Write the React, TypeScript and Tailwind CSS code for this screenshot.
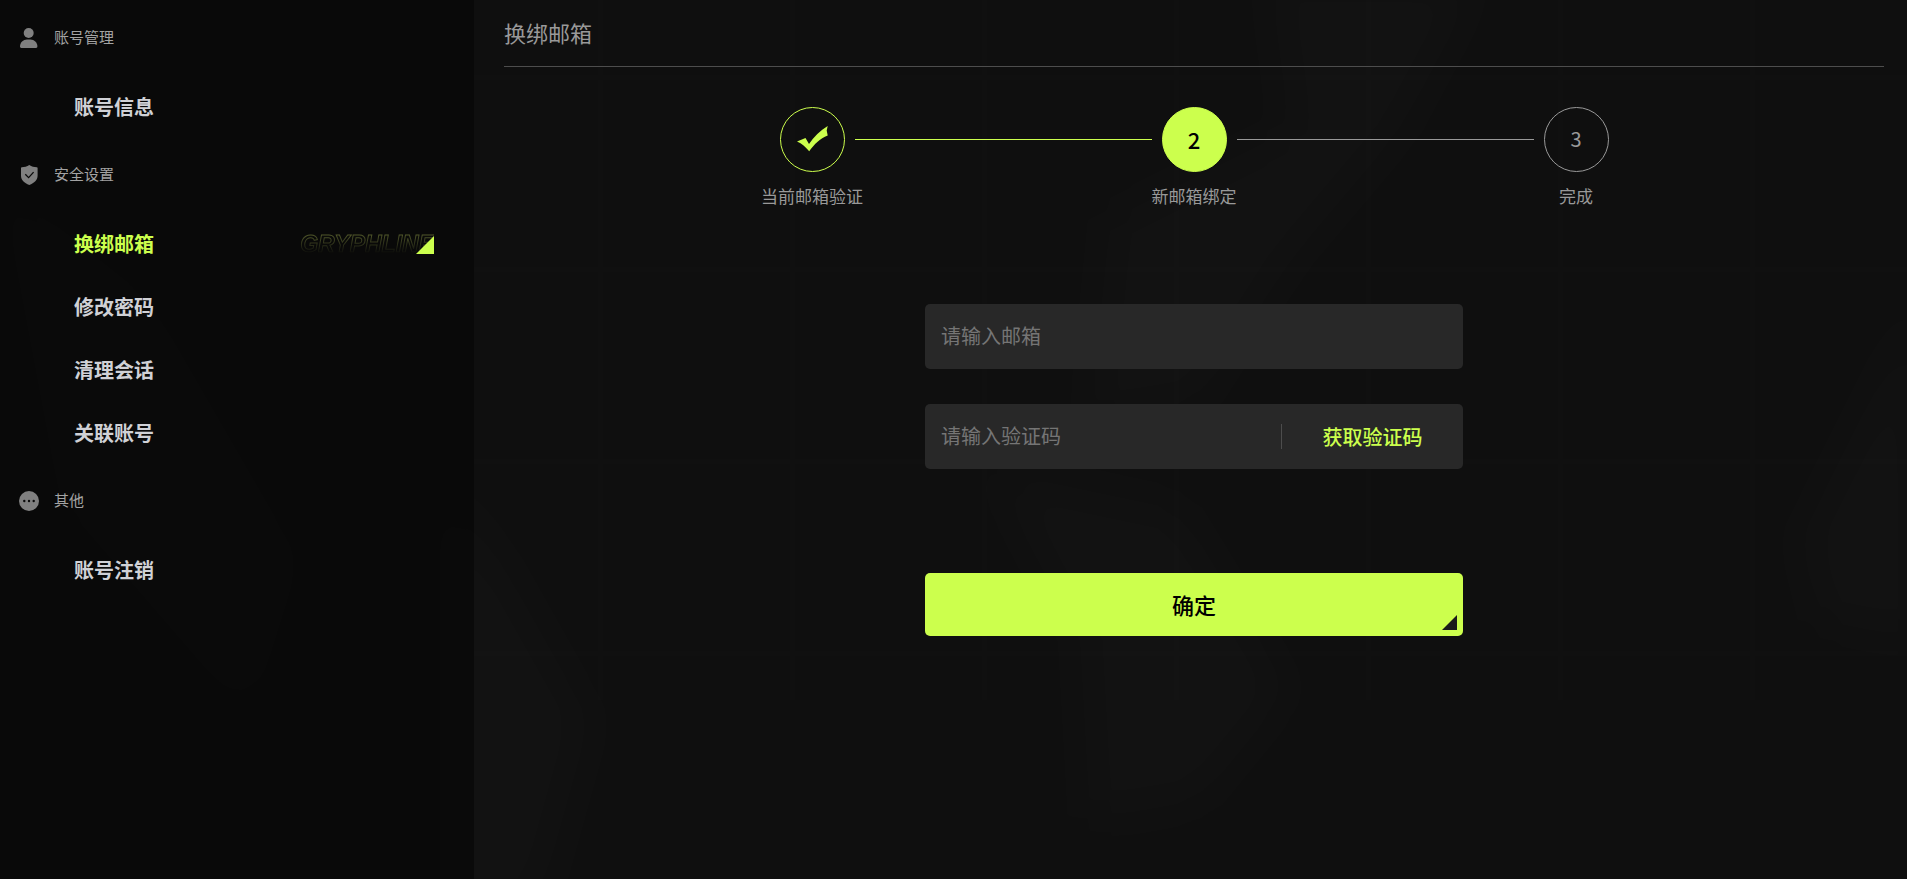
import { useState } from 'react'
import type { ReactNode } from 'react'
import clsx from 'clsx'

type MenuGroup = {
  title: string
  icon: ReactNode
  items: string[]
}

const UserIcon = (
  <svg viewBox="0 0 20 20" className="size-5" fill="currentColor" aria-hidden="true">
    <circle cx="9.7" cy="5" r="5" />
    <path d="M1 18.6C1 14.6 4.2 11.6 8 11.6h3.4c3.8 0 7 3 7 7 0 .8-.5 1.4-1.3 1.4H2.3C1.5 20 1 19.4 1 18.6Z" />
  </svg>
)

const ShieldIcon = (
  <svg viewBox="0 0 20 20" className="size-5" aria-hidden="true">
    <path
      d="M10.3 0C8 1.5 5.4 2.2 2.8 2.3c-.5 0-.8.3-.8.8V10.5c0 4.6 3.3 7.6 8.3 9.4 5-1.8 8.3-4.8 8.3-9.4V3.1c0-.5-.3-.8-.8-.8C15.2 2.2 12.6 1.5 10.3 0Z"
      fill="currentColor"
    />
    <path d="M6.3 9.3l3.3 3.3 5-5.5" fill="none" stroke="#0a0a0a" strokeWidth="1.3" />
  </svg>
)

const MoreIcon = (
  <svg viewBox="0 0 20 20" className="size-5" aria-hidden="true">
    <circle cx="10" cy="10" r="10" fill="currentColor" />
    <g fill="#0a0a0a">
      <circle cx="5.3" cy="10" r="1.2" />
      <circle cx="10" cy="10" r="1.2" />
      <circle cx="14.7" cy="10" r="1.2" />
    </g>
  </svg>
)

const menu: MenuGroup[] = [
  { title: '账号管理', icon: UserIcon, items: ['账号信息'] },
  { title: '安全设置', icon: ShieldIcon, items: ['换绑邮箱', '修改密码', '清理会话', '关联账号'] },
  { title: '其他', icon: MoreIcon, items: ['账号注销'] },
]

const steps = ['当前邮箱验证', '新邮箱绑定', '完成']

// Smoke and grid lines, barely brighter than the page itself
function Backdrop() {
  return (
    <svg
      className="pointer-events-none absolute inset-0 -z-10 size-full"
      viewBox="0 0 1907 879"
      preserveAspectRatio="xMidYMid slice"
      aria-hidden="true"
    >
      <defs>
        <filter id="smoke" x="-20%" y="-20%" width="140%" height="140%">
          <feGaussianBlur stdDeviation="24" />
        </filter>
        <pattern id="grid" x="598" y="75" width="192" height="192" patternUnits="userSpaceOnUse">
          <path d="M2 0V192M0 2H192" stroke="#fff" strokeOpacity="0.005" strokeWidth="5" />
        </pattern>
      </defs>
      <g filter="url(#smoke)" fill="#fff" fillOpacity="0.012">
        <path d="M1270 -20H1480L1400 130 1290 260 1200 400 1090 420 1110 220 1290 130Z" />
        <path d="M990 470L1180 510 1290 690 1200 800 1090 820 1080 640Z" />
        <path d="M440 480L500 560 590 720 540 900H440Z" />
        <path d="M1870 400L1920 300V640L1820 620 1800 540Z" />
        <path d="M0 180L150 300 300 560 250 720 60 500Z" />
      </g>
      <rect x="474" width="1433" height="700" fill="url(#grid)" />
    </svg>
  )
}

function Sidebar() {
  const [active, setActive] = useState('换绑邮箱')

  return (
    <nav className="w-[474px] shrink-0 bg-black/40 pt-px">
      {menu.map((group) => (
        <section key={group.title}>
          <h2 className="flex h-[75px] items-center gap-[15px] pl-[19px] pb-[2px] text-[15px] text-[#a3a3a3]">
            <span className="text-[#808080]">{group.icon}</span>
            {group.title}
          </h2>
          <ul className="flex flex-col gap-px">
            {group.items.map((item) => (
              <li key={item}>
                <button
                  type="button"
                  onClick={() => setActive(item)}
                  className={clsx(
                    'flex h-[62px] w-full items-center justify-between pr-10 pl-[74px] text-xl font-bold',
                    active === item ? 'text-[#ccff4d]' : 'text-[#d0d1d6]',
                  )}
                >
                  {item}
                  {active === item && (
                    <span className="relative" aria-hidden="true">
                      <span className="block font-[Liberation_Sans] text-[23px] leading-5 font-bold text-transparent italic [-webkit-text-stroke:1px_#99a84d80] [mask-image:linear-gradient(to_bottom,black,transparent)]">
                        GRYPHLINE
                      </span>
                      <svg viewBox="0 0 18 18" className="absolute right-0 bottom-0 size-[18px]" fill="#ccff4d">
                        <path d="M18 0V18H0Z" />
                      </svg>
                    </span>
                  )}
                </button>
              </li>
            ))}
          </ul>
        </section>
      ))}
    </nav>
  )
}

function Steps({ current }: { current: number }) {
  return (
    <ol className="mx-auto mt-10 flex w-full max-w-[829px]">
      {steps.map((label, i) => (
        <li key={label} className={clsx('flex', i > 0 && 'flex-1')}>
          {i > 0 && (
            <span
              className={clsx('mx-[10px] mt-8 h-px flex-1', i <= current ? 'bg-[#ccff4d]' : 'bg-[#999999]')}
            />
          )}
          <div className="flex w-[65px] flex-col items-center">
            <span
              className={clsx(
                'flex size-[65px] items-center justify-center rounded-full border pb-px',
                i < current && 'border-[#ccff4d]',
                i === current && 'border-[#ccff4d] bg-[#ccff4d] text-[22px] font-medium text-black',
                i > current && 'border-[#999999] text-xl text-[#999999]',
              )}
            >
              {i < current ? (
                <svg viewBox="0 0 31 26" className="h-[26px] w-[31px]" fill="#ccff4d" aria-label="已完成">
                  <path d="M0 15.5L8.5 12 12 18C17 11 23 4.5 30.7 0L29.7 4.5 30.7 9.5C23 12.5 17 18.5 12.2 25.3 8.5 21 5 17.5 0 15.5Z" />
                </svg>
              ) : (
                i + 1
              )}
            </span>
            <span className="mt-3 text-[17px] leading-6 whitespace-nowrap text-[#999999]">{label}</span>
          </div>
        </li>
      ))}
    </ol>
  )
}

export default function App() {
  const [email, setEmail] = useState('')
  const [code, setCode] = useState('')

  return (
    <div className="relative isolate flex min-h-screen bg-[#0f0f0f] font-['Noto_Sans_CJK_SC',sans-serif]">
      <Backdrop />
      <Sidebar />

      <main className="min-w-0 flex-1 pr-[23px] pl-[30px]">
        <h1 className="flex h-[67px] items-center border-b border-[#4d4d4d] pb-[2px] text-[22px] text-[#999999]">
          换绑邮箱
        </h1>

        <Steps current={1} />

        <form className="mx-auto mt-24 w-full max-w-[538px]" onSubmit={(e) => e.preventDefault()}>
          <input
            type="email"
            aria-label="邮箱"
            placeholder="请输入邮箱"
            value={email}
            onChange={(e) => setEmail(e.target.value)}
            className="block h-[65px] w-full rounded-[5px] bg-[#282828] px-4 pb-[2px] text-xl text-white outline-none placeholder:text-[#757575]"
          />

          <div className="mt-[35px] flex h-[65px] items-center rounded-[5px] bg-[#282828]">
            <input
              type="text"
              aria-label="验证码"
              placeholder="请输入验证码"
              value={code}
              onChange={(e) => setCode(e.target.value)}
              className="h-full min-w-0 flex-1 bg-transparent px-4 pb-[2px] text-xl text-white outline-none placeholder:text-[#757575]"
            />
            <button
              type="button"
              className="h-[25px] w-[182px] border-l border-[#4d4d4d] text-xl leading-6 font-medium text-[#ccff4d]"
            >
              获取验证码
            </button>
          </div>

          <button
            type="submit"
            className="relative mt-[104px] h-[63px] w-full rounded-[5px] bg-[#ccff4d] text-[22px] font-medium text-black"
          >
            确定
            <svg viewBox="0 0 15 15" className="absolute right-[6px] bottom-[6px] size-[15px]" fill="#1a1a1a" aria-hidden="true">
              <path d="M15 0V15H0Z" />
            </svg>
          </button>
        </form>
      </main>
    </div>
  )
}
